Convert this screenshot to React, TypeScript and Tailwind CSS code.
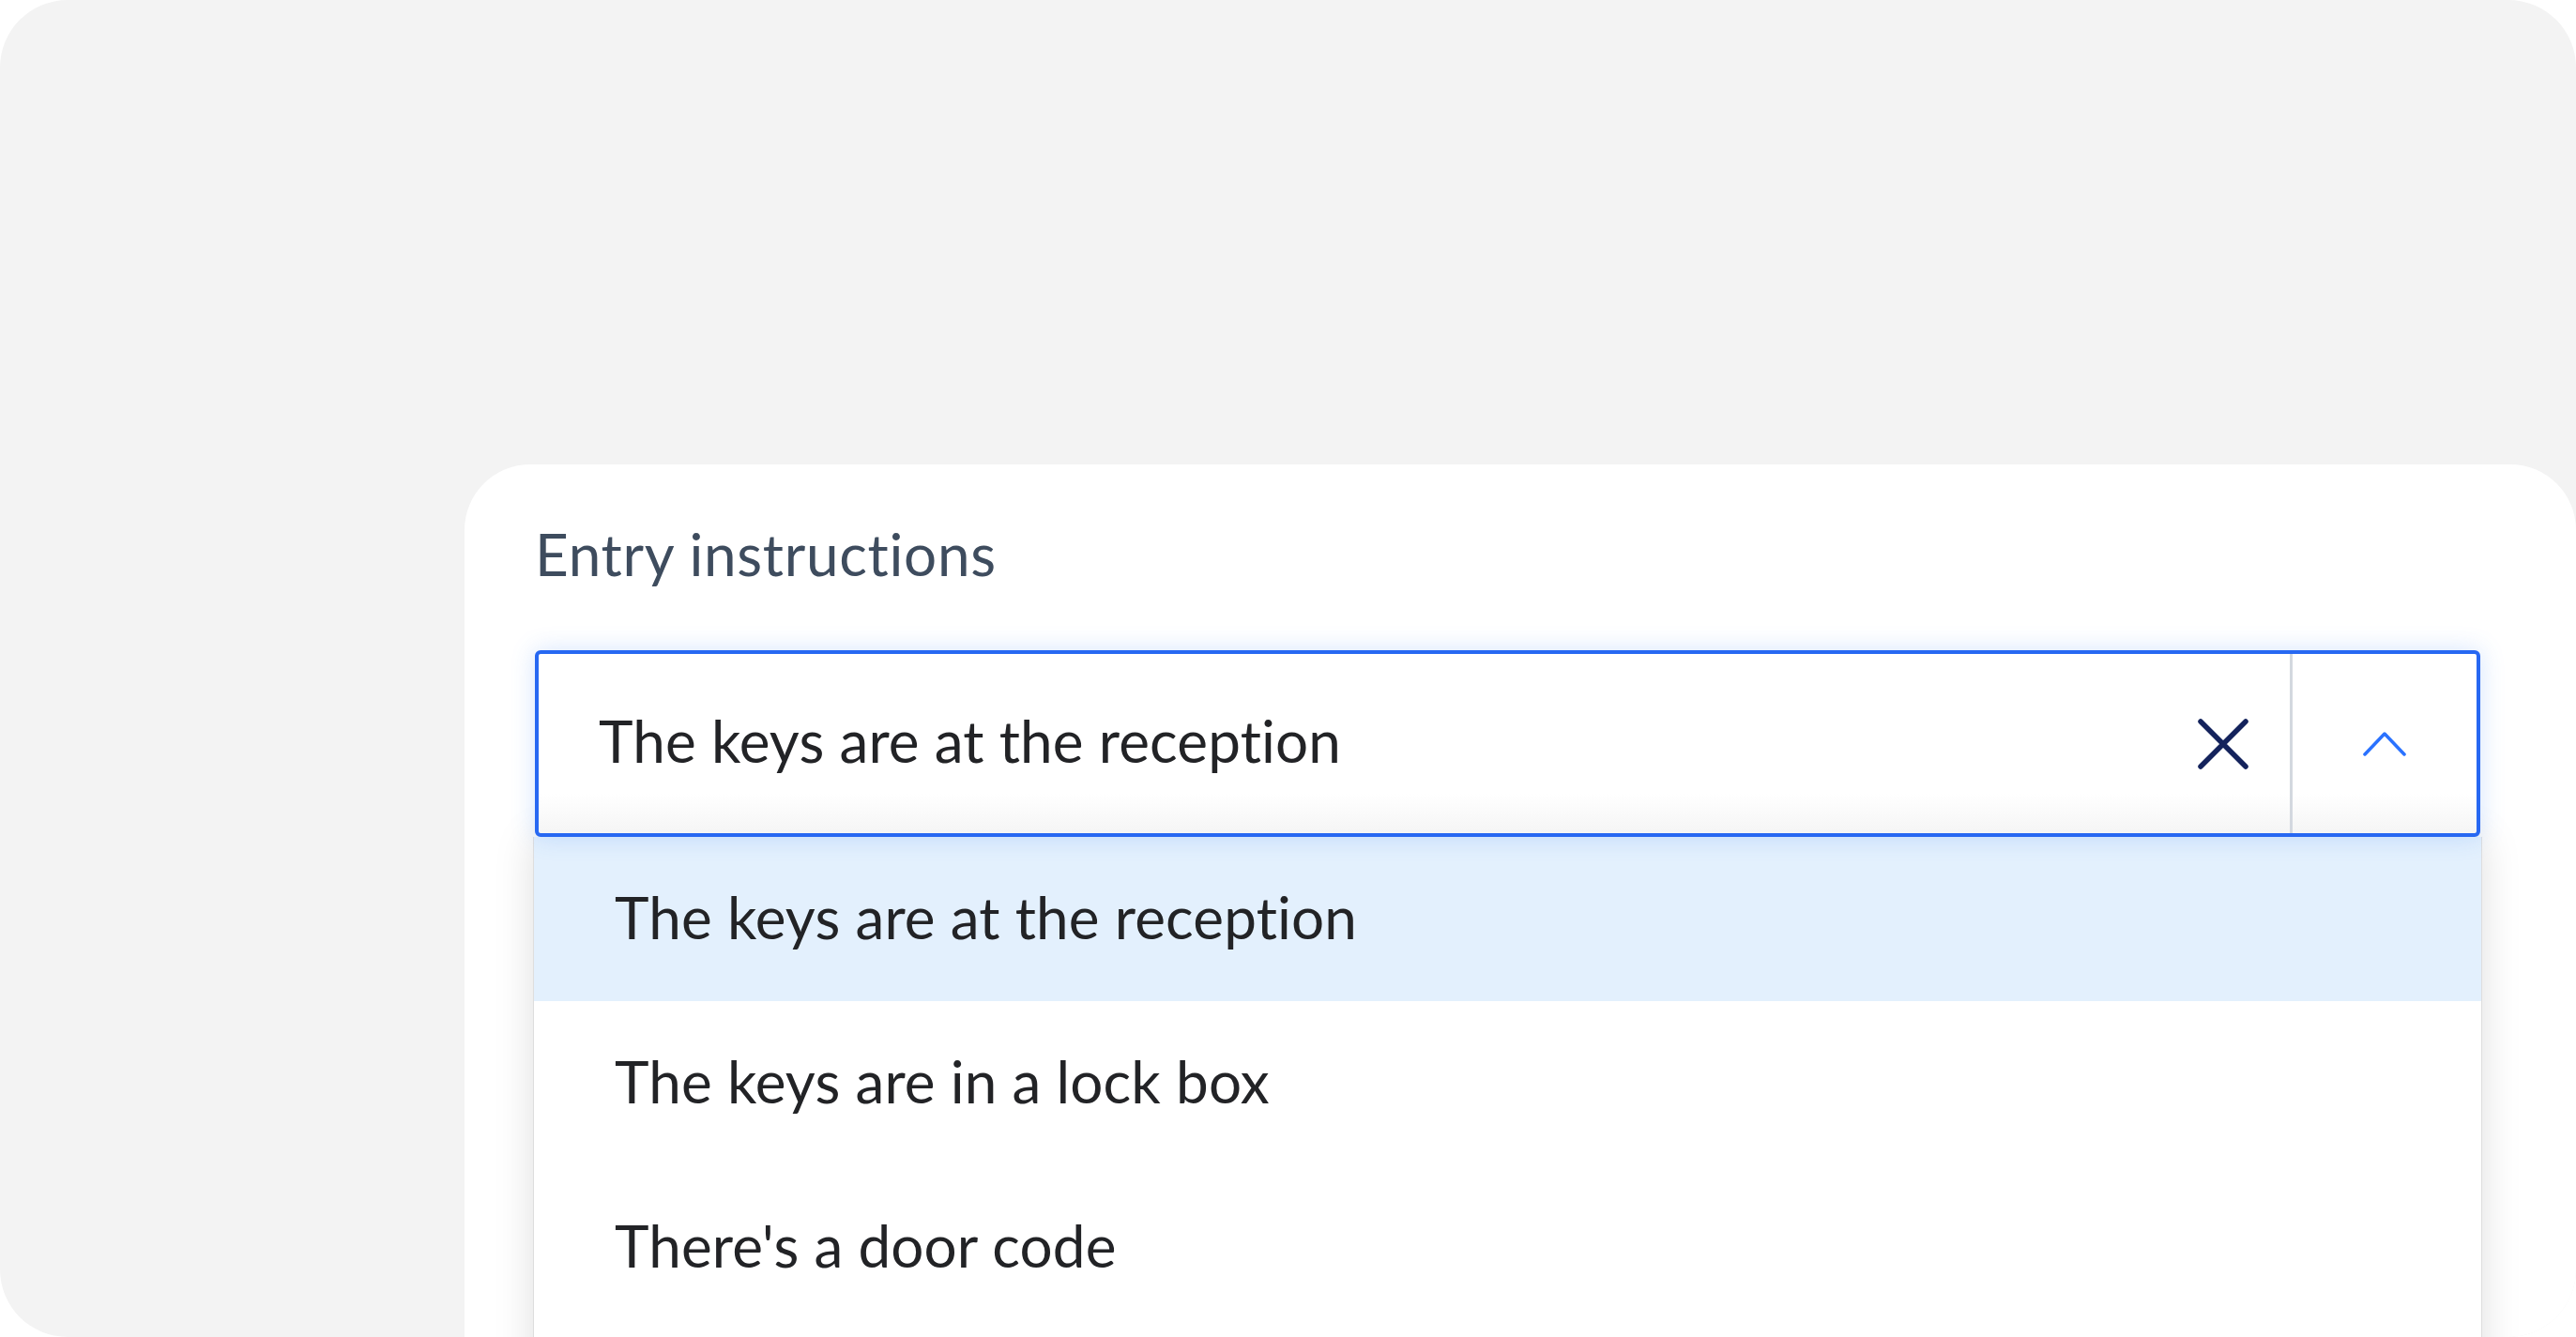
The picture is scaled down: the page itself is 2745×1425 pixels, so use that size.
import React from "react";

const options = [
  "The keys are at the reception",
  "The keys are in a lock box",
  "There's a door code",
];

export default function App() {
  return (
    <div className="w-[2745px] h-[1425px] bg-white overflow-hidden font-['Lato',sans-serif]">
      <div className="w-full h-full rounded-[72px] bg-[#f3f3f3] overflow-hidden pt-[495px] pl-[495px]">
        <div className="h-[1100px] rounded-[70px] bg-white pt-[59px] pl-[75px] pr-[102px]">
          <div className="text-[62px] leading-[72px] tracking-[0.7px] text-[#3e4c5e]">Entry instructions</div>
          <div className="relative z-10 mt-[67px] h-[199px] rounded-[6px] border-[4px] border-[#2768f2] bg-[linear-gradient(to_bottom,#ffffff_78%,#f5f5f5)] shadow-[0_0_26px_rgba(59,130,246,0.22)] flex">
            <div className="flex-1 flex items-center pl-[64px] pb-[7px] text-[62px] leading-[72px] tracking-[0.15px] text-[#222326]">
              The keys are at the reception
            </div>
            <div className="w-[142px] flex items-center justify-center">
              <svg width="54" height="54" viewBox="0 0 54 54">
                <path d="M3 3L51 51M51 3L3 51" stroke="#14235c" strokeWidth="5.5" strokeLinecap="round" fill="none" />
              </svg>
            </div>
            <div className="w-[3px] bg-[#d3d8df]" />
            <div className="w-[196px] flex items-center justify-center">
              <svg width="46" height="27" viewBox="0 0 46 27">
                <polyline points="2,25 23,3 44,25" stroke="#2a72ff" strokeWidth="3.5" strokeLinecap="round" strokeLinejoin="round" fill="none" />
              </svg>
            </div>
          </div>
          <div className="-mx-[2px] min-h-[700px] bg-white border-x border-[#dedede] shadow-[0_0_40px_rgba(0,0,0,0.13)]">
            {options.map((o, i) => (
              <div
                key={o}
                className={`h-[175px] flex items-center pl-[86px] pb-[5px] text-[62px] leading-[72px] tracking-[0.15px] text-[#222326] ${i === 0 ? "bg-[#e3f0fd]" : "bg-white"}`}
              >
                {o}
              </div>
            ))}
          </div>
        </div>
      </div>
    </div>
  );
}
